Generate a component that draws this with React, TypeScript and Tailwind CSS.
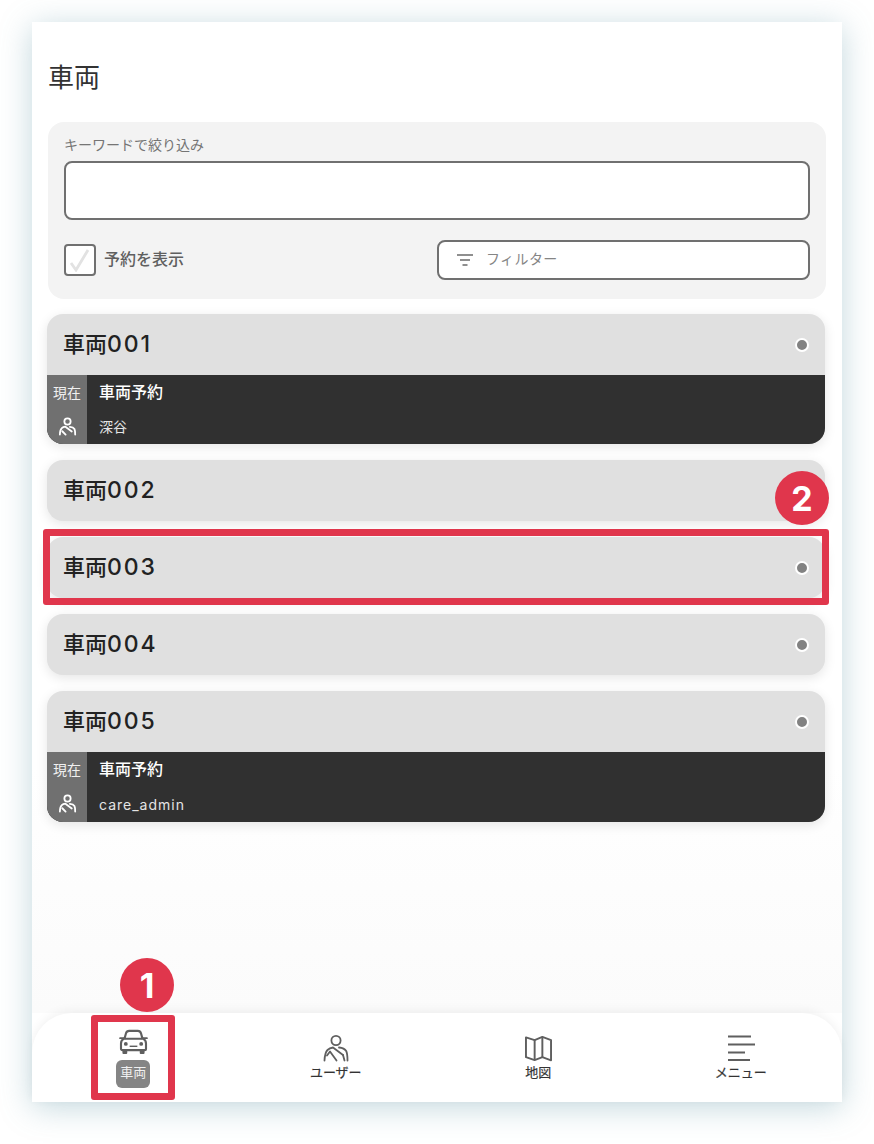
const jp = "font-['Inter','Noto_Sans_CJK_JP',sans-serif]";

function UserIcon({ className, weight = 1.8 }: { className?: string; weight?: number }) {
  return (
    <svg viewBox="0 0 28 28" fill="none" stroke="currentColor" strokeWidth={weight} strokeLinecap="round" strokeLinejoin="round" className={className}>
      <circle cx="14" cy="6.5" r="4.6" />
      <path d="M2.5 26.5c.2-4.5 1-8.500 3-10.500 1.600-1.500 3.500-2.200 5.500-2.500l10 7.500" />
      <path d="M5 21.500l3-4 6.500 9" />
      <path d="M17 13.500c3.500.3 6 1.500 7.200 3.500.9 1.800 1.300 5.500 1.300 9.500" />
      <path d="M21 21l1.500 5.500" />
    </svg>
  );
}

function SmallUserIcon({ className }: { className?: string }) {
  return (
    <svg viewBox="0 0 20 20" fill="none" stroke="currentColor" strokeWidth="1.900" strokeLinecap="round" strokeLinejoin="round" className={className}>
      <circle cx="10" cy="4.800" r="3.300" />
      <path d="M2 18.500c0-3 .6-5.500 2-6.800 1-.9 2.300-1.300 3.800-1.500l6.700 5" />
      <path d="M4.500 15l3.500 3.500" />
      <path d="M12.500 10.300c2.300.2 4 1 4.800 2.300.6 1.200.8 3.300.8 5.900" />
    </svg>
  );
}

function CarIcon({ className }: { className?: string }) {
  return (
    <svg viewBox="0 0 30 26" fill="none" className={className}>
      <path d="M5.500 10.500l1.700-6C7.700 2.800 9 2 10.500 2h9c1.500 0 2.800.8 3.300 2.500l1.700 6" stroke="currentColor" strokeWidth="2.200" />
      <path d="M1 9.500h3.800M25.200 9.500H29" stroke="currentColor" strokeWidth="1.800" strokeLinecap="round" />
      <path d="M4.700 10.200h20.600c1.600 1 2.700 2.700 2.700 4.800v5.500c0 .8-.7 1.500-1.500 1.500h-23c-.8 0-1.500-.7-1.500-1.500V15c0-2.100 1.100-3.800 2.700-4.800z" stroke="currentColor" strokeWidth="2.200" />
      <path d="M3.500 21.500h5V25a1 1 0 0 1-1 1h-3a1 1 0 0 1-1-1zM21.500 21.500h5V25a1 1 0 0 1-1 1h-3a1 1 0 0 1-1-1z" fill="currentColor" />
      <circle cx="7" cy="15.500" r="2" fill="currentColor" />
      <circle cx="23" cy="15.500" r="2" fill="currentColor" />
      <path d="M11 18h8" stroke="currentColor" strokeWidth="1.500" />
    </svg>
  );
}

function MapIcon({ className }: { className?: string }) {
  return (
    <svg viewBox="0 0 30 28" fill="none" stroke="currentColor" strokeWidth="2" strokeLinejoin="round" className={className}>
      <path d="M2 2.500l9 2.800 8-3.300 9 3.300v21l-9-3.300-8 3-9-3z" />
      <path d="M11 5.300V26M19 2v21" />
    </svg>
  );
}

function MenuIcon({ className }: { className?: string }) {
  return (
    <svg viewBox="0 0 28 26" fill="none" stroke="currentColor" strokeWidth="2" className={className}>
      <path d="M1 1.500h23M1 9.500h27M1 17.500h17M1 25h22" />
    </svg>
  );
}

function VehicleCard({ name, num, user, latin }: { name: string; num: string; user?: string; latin?: boolean }) {
  return (
    <div className="rounded-2xl bg-[#e0e0e0] shadow-[0_3px_12px_rgba(0,0,0,0.1)] overflow-hidden">
      <div className="h-[61px] flex items-center justify-between pl-4 pr-4">
        <span className="text-[22px] font-medium text-[#222222]">
          {name}
          <span className="text-[23px] tracking-[1.9px]">{num}</span>
        </span>
        <span className="w-3.5 h-3.5 rounded-full bg-[#828282] border-2 border-white" />
      </div>
      {user && (
        <div className={latin ? "flex h-[70px] bg-[#303030] text-white" : "flex h-[69px] bg-[#303030] text-white"}>
          <div className="w-10 bg-[#707070] flex flex-col items-center">
            <span className="text-[14px] leading-[35px] text-[#f0f0f0]">現在</span>
            <SmallUserIcon className="w-[19px] h-[19px] mt-[7px] text-white" />
          </div>
          <div className="flex flex-col pl-[12px]">
            <span className="text-[16px] font-medium leading-[35px]">車両予約</span>
            <span className={latin ? "text-[14px] leading-[35px] text-[#e4e4e4] tracking-[1px]" : "text-[14px] leading-[33px] text-[#e4e4e4]"}>{user}</span>
          </div>
        </div>
      )}
    </div>
  );
}

function NavItem({ icon, label }: { icon: React.ReactNode; label: string }) {
  return (
    <div className="flex flex-col items-center pt-[20px] text-[#5f5f5f]">
      <div className="h-[30px] flex items-center justify-center">{icon}</div>
      <span className="text-[13px] leading-[16px] text-[#333333] mt-px [-webkit-text-stroke:0.2px_#333333]">{label}</span>
    </div>
  );
}

export default function App() {
  return (
    <div className={`${jp} w-[874px] h-[1144px] bg-white pl-8 pt-[22px] overflow-hidden`}>
      <div className="relative w-[810px] h-[1080px] flex flex-col bg-white shadow-[0_5px_30px_rgba(95,150,165,0.38)]">
        <div className="flex-1 px-4 bg-gradient-to-b from-white from-75% to-[#fbfbfb]">
          <h1 className="text-[26px] leading-[38px] text-[#333333] pt-[37px] h-[100px]">車両</h1>
          <div className="rounded-2xl bg-[#f3f3f3] h-[177px] px-4 pt-[13px]">
            <div className="text-[14px] leading-[20px] text-[#757575]">キーワードで絞り込み</div>
            <div className="h-[59px] mt-[6px] rounded-lg border-2 border-[#707070] bg-white" />
            <div className="flex items-center justify-between mt-5">
              <div className="flex items-center gap-2">
                <div className="w-8 h-8 rounded border-2 border-[#707070] bg-white flex items-center justify-center">
                  <svg viewBox="0 0 24 24" className="w-6 h-6" fill="none" stroke="#e2e2e2" strokeWidth="2.800">
                    <path d="M3 15l5 7L20 2" />
                  </svg>
                </div>
                <span className="text-[16px] leading-[22px] pb-0.5 font-medium text-[#5f5f5f]">予約を表示</span>
              </div>
              <div className="w-[373px] h-10 rounded-lg border-2 border-[#707070] bg-white flex items-center pl-[18px] gap-[13px]">
                <svg viewBox="0 0 16 12" className="w-4 h-3" fill="none" stroke="#6b6b6b" strokeWidth="1.500">
                  <path d="M0 1h16M3 6h10M5.500 11h5" />
                </svg>
                <span className="text-[14px] leading-[20px] pb-0.5 tracking-[0.4px] text-[#858585]">フィルター</span>
              </div>
            </div>
          </div>
          <div className="flex flex-col gap-4 mt-[15px] -ml-px -mr-px pr-[2px]">
            <VehicleCard name="車両" num="001" user="深谷" />
            <VehicleCard name="車両" num="002" />
            <VehicleCard name="車両" num="003" />
            <VehicleCard name="車両" num="004" />
            <VehicleCard name="車両" num="005" user="care_admin" latin />
          </div>
        </div>

        <div className="h-[89px] grid grid-cols-4 bg-white rounded-t-[40px] shadow-[0_-3px_10px_rgba(0,0,0,0.05)]">
          <div className="flex flex-col items-center pt-[16px] text-[#5f5f5f]">
            <CarIcon className="w-[29px] h-[25px]" />
            <span className="mt-[6px] w-[34px] h-[28px] rounded-md bg-[#858585] text-[#f0f0f0] text-[13px] flex items-center justify-center pb-0.5">車両</span>
          </div>
          <NavItem icon={<UserIcon className="w-[28px] h-[28px]" />} label="ユーザー" />
          <NavItem icon={<MapIcon className="w-[29px] h-[27px]" />} label="地図" />
          <NavItem icon={<MenuIcon className="w-[28px] h-[26px]" />} label="メニュー" />
        </div>

        {/* Annotations over the screen */}
        <div className="absolute left-[11px] top-[507px] w-[786px] h-[76px] rounded-[3px] border-[7px] border-[#e0364c]" />
        <div className="absolute left-[59px] top-[993px] w-[84px] h-[85px] rounded-[3px] border-[7px] border-[#e0364c]" />
        <div className="absolute left-[743px] top-[449px] w-[54px] h-[54px] rounded-full bg-[#e0364c] text-white text-[34px] font-bold flex items-center justify-center">2</div>
        <div className="absolute left-[88px] top-[936px] w-[54px] h-[54px] rounded-full bg-[#e0364c] text-white text-[34px] font-bold flex items-center justify-center">1</div>
      </div>
    </div>
  );
}
